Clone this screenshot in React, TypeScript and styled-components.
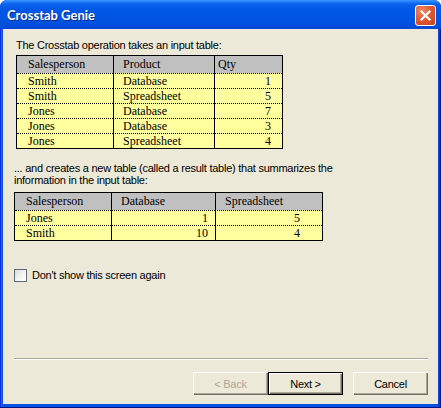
import React from 'react';
import styled, { createGlobalStyle } from 'styled-components';

const GlobalStyle = createGlobalStyle`
  html, body { margin: 0; padding: 0; background: #ffffff; }
  body { font-family: "Liberation Sans", Arial, sans-serif; }
  *, *::before, *::after { box-sizing: border-box; }
`;

const Window = styled.div`
  width: 441px;
  height: 408px;
  display: flex;
  flex-direction: column;
  padding: 0 3px 4px;
  border-radius: 7px 7px 0 0;
  overflow: hidden;
  background: linear-gradient(
    to right,
    #0831d9 0 1px,
    #1a68f0 1px 2px,
    #0a52e0 2px calc(100% - 3px),
    #0a48d6 calc(100% - 3px) calc(100% - 2px),
    #0636c8 calc(100% - 2px) calc(100% - 1px),
    #001c9a calc(100% - 1px)
  );
  box-shadow: inset 0 -1px 0 #00138c;
`;

const TitleBar = styled.div`
  height: 29px;
  margin: 0 -3px;
  padding: 5px 5px 0 7px;
  display: flex;
  align-items: flex-start;
  justify-content: space-between;
  background: linear-gradient(
    180deg,
    #3d95ff 0px,
    #1e7cf8 2px,
    #0a63ec 4px,
    #0058e6 9px,
    #0055e3 18px,
    #004fdc 25px,
    #0046d2 29px
  );
`;

const Title = styled.span`
  font-family: Lato, "DejaVu Sans", sans-serif;
  font-weight: 700;
  font-size: 13px;
  line-height: 21px;
  color: #ffffff;
  text-shadow: 1px 1px 0 #0a2a8a;
`;

const CloseButton = styled.div`
  width: 21px;
  height: 21px;
  border: 1px solid #ffffff;
  border-radius: 3px;
  background: radial-gradient(circle at 30% 25%, #f08a68 0%, #e05a36 45%, #c8401c 100%);
  display: flex;
  align-items: center;
  justify-content: center;
`;

const Client = styled.div`
  flex: 1;
  display: flex;
  flex-direction: column;
  align-items: flex-start;
  padding: 10px 10px 9px 11px;
  background: #ece9d8;
  color: #000000;
  font-family: "Liberation Sans", Arial, sans-serif;
  font-size: 11px;
  letter-spacing: -0.25px;
`;

const Text = styled.p<{ $indent?: number; $top?: number }>`
  margin: ${p => p.$top ?? 0}px 0 0 ${p => p.$indent ?? 0}px;
  line-height: ${p => (p.$top ? 12 : 13)}px;
  white-space: nowrap;
`;

const Table = styled.div<{ $cols: string; $indent?: number; $top: number }>`
  display: grid;
  grid-template-columns: ${p => p.$cols};
  margin: ${p => p.$top}px 0 0 ${p => p.$indent ?? 0}px;
  border: 1px solid #000000;
  font-family: "Liberation Serif", "Times New Roman", serif;
  font-size: 12px;
  letter-spacing: 0;
  color: #000000;
`;

const HeadCell = styled.div<{ $divider?: boolean; $pad: number }>`
  height: 17px;
  line-height: 17px;
  background: #c0c0c0;
  border-left: ${p => (p.$divider ? '1px solid #000000' : 'none')};
  padding-left: ${p => p.$pad}px;
  white-space: nowrap;
`;

const Cell = styled.div<{ $divider?: boolean; $right?: boolean; $pad: number }>`
  height: 15px;
  line-height: 14px;
  border-top: 1px dotted #000000;
  border-left: ${p => (p.$divider ? '1px solid #000000' : 'none')};
  background: #ffffa0;
  text-align: ${p => (p.$right ? 'right' : 'left')};
  padding: 0 ${p => (p.$right ? p.$pad : 0)}px 0 ${p => (p.$right ? 0 : p.$pad)}px;
  white-space: nowrap;
`;

const CheckRow = styled.label`
  margin-top: 28px;
  display: flex;
  align-items: center;
  gap: 5px;
  height: 13px;
  line-height: 13px;
`;

const CheckBox = styled.span`
  width: 13px;
  height: 13px;
  border: 1px solid #5f6b78;
  background: linear-gradient(135deg, #dcdcd7 0%, #f5f5f3 60%, #ffffff 100%);
`;

const Spacer = styled.div`
  flex: 1;
`;

const Separator = styled.div`
  align-self: stretch;
  height: 2px;
  border-top: 1px solid #aca899;
  border-bottom: 1px solid #ffffff;
`;

const ButtonRow = styled.div`
  align-self: stretch;
  margin-top: 12px;
  display: flex;
  justify-content: flex-end;
`;

const Button = styled.div<{ $default?: boolean; $disabled?: boolean; $gap?: number }>`
  width: 75px;
  height: 23px;
  margin-left: ${p => p.$gap ?? 0}px;
  display: flex;
  align-items: center;
  justify-content: center;
  background: #ece9d8;
  border: ${p => (p.$default ? '1px solid #000000' : 'none')};
  box-shadow: inset 1px 1px 0 #ffffff, inset -1px -1px 0 #716f64, inset -2px -2px 0 #aca899;
  color: ${p => (p.$disabled ? '#aca899' : '#000000')};
  font-size: 11px;
`;

type Col = { label: string; pad: number; right?: boolean; rpad?: number };

const input: Col[] = [
  { label: 'Salesperson', pad: 11 },
  { label: 'Product', pad: 9 },
  { label: 'Qty', pad: 3, right: true, rpad: 11 },
];
const inputRows = [
  ['Smith', 'Database', '1'],
  ['Smith', 'Spreadsheet', '5'],
  ['Jones', 'Database', '7'],
  ['Jones', 'Database', '3'],
  ['Jones', 'Spreadsheet', '4'],
];

const result: Col[] = [
  { label: 'Salesperson', pad: 11 },
  { label: 'Database', pad: 9, right: true, rpad: 7 },
  { label: 'Spreadsheet', pad: 9, right: true, rpad: 22 },
];
const resultRows = [
  ['Jones', '1', '5'],
  ['Smith', '10', '4'],
];

function DataTable({ cols, rows, widths, indent, top }: { cols: Col[]; rows: string[][]; widths: string; indent?: number; top: number }) {
  return (
    <Table $cols={widths} $indent={indent} $top={top}>
      {cols.map((c, i) => (
        <HeadCell key={c.label} $divider={i > 0} $pad={c.pad}>
          {c.label}
        </HeadCell>
      ))}
      {rows.map((r, ri) =>
        r.map((v, ci) => {
          const c = cols[ci];
          return (
            <Cell key={`${ri}-${ci}`} $divider={ci > 0} $right={c.right} $pad={c.right ? c.rpad ?? 0 : c.pad}>
              {v}
            </Cell>
          );
        })
      )}
    </Table>
  );
}

export default function App() {
  return (
    <>
      <GlobalStyle />
      <Window>
        <TitleBar>
          <Title>Crosstab Genie</Title>
          <CloseButton>
            <svg width="11" height="11" viewBox="0 0 11 11">
              <path d="M1.5 1.5 L9.5 9.5 M9.5 1.5 L1.5 9.5" stroke="#ffffff" strokeWidth="2.2" strokeLinecap="square" />
            </svg>
          </CloseButton>
        </TitleBar>
        <Client>
          <Text $indent={2}>The Crosstab operation takes an input table:</Text>
          <DataTable cols={input} rows={inputRows} widths="96px 101px 68px" indent={2} top={3} />
          <Text $top={13}>
            ... and creates a new table (called a result table) that summarizes the
            <br />
            information in the input table:
          </Text>
          <DataTable cols={result} rows={resultRows} widths="96px 104px 107px" top={6} />
          <CheckRow>
            <CheckBox />
            <span>Don't show this screen again</span>
          </CheckRow>
          <Spacer />
          <Separator />
          <ButtonRow>
            <Button $disabled>&lt; Back</Button>
            <Button $default>Next &gt;</Button>
            <Button $gap={10}>Cancel</Button>
          </ButtonRow>
        </Client>
      </Window>
    </>
  );
}
